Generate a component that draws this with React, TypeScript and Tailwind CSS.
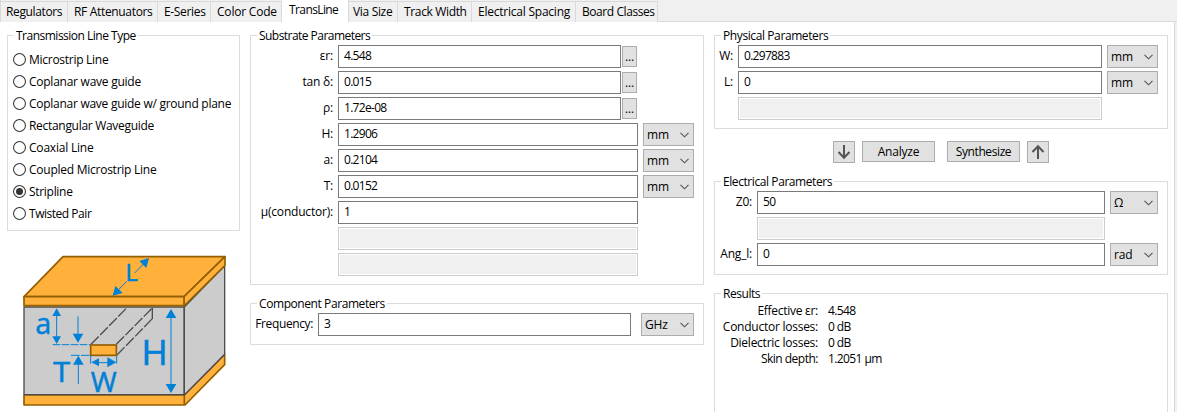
import type { ReactNode } from "react";

function Tab({ label, className }: { label: string; className: string }) {
  return (
    <div className={`h-[21px] shrink-0 whitespace-nowrap border-r border-t border-[#d9d9d9] bg-[#f0f0f0] leading-[20px] ${className}`}>
      {label}
    </div>
  );
}

function Group({
  title,
  titleClass,
  className,
  children,
}: {
  title: string;
  titleClass: string;
  className: string;
  children?: ReactNode;
}) {
  return (
    <fieldset className={`min-w-0 shrink-0 border border-[#dcdcdc] ${className}`}>
      <legend className={`ml-[6px] h-[15px] whitespace-nowrap px-[2px] leading-[16px] ${titleClass}`}>{title}</legend>
      {children}
    </fieldset>
  );
}

function Field({ value, className }: { value?: string; className: string }) {
  if (value === undefined) {
    return <div className={`h-[23px] shrink-0 border border-[#cccccc] bg-[#f0f0f0] shadow-[inset_0_0_0_1px_#fff] ${className}`} />;
  }
  return (
    <div className={`h-[23px] shrink-0 border border-[#7a7a7a] bg-white pl-[5px] leading-[20px] tracking-[-0.7px] ${className}`}>{value}</div>
  );
}

function Combo({ value, className }: { value: string; className: string }) {
  return (
    <div className={`flex h-[23px] shrink-0 items-center justify-between border border-[#adadad] bg-[#e1e1e1] pl-[3px] pr-[4px] ${className}`}>
      <span className="leading-[21px]">{value}</span>
      <svg width="9" height="6" viewBox="0 0 9 6" fill="none" stroke="#555" strokeWidth="1.1">
        <path d="M0.5 0.8 L4.5 4.8 L8.5 0.8" />
      </svg>
    </div>
  );
}

function Row({ label, labelClass, children }: { label?: string; labelClass: string; children: ReactNode }) {
  return (
    <div className="flex h-[23px]">
      <div className={`shrink-0 whitespace-nowrap text-right leading-[21px] ${labelClass}`}>{label}</div>
      {children}
    </div>
  );
}

function MoreButton() {
  return (
    <div className="ml-[1px] mt-[1px] h-[21px] w-[15px] border border-[#adadad] bg-[#e1e1e1] text-center leading-[20px]">...</div>
  );
}

const lineTypes = [
  { label: "Microstrip Line", track: "tracking-[-0.27px]" },
  { label: "Coplanar wave guide", track: "tracking-[-0.25px]" },
  { label: "Coplanar wave guide w/ ground plane", track: "tracking-[-0.27px]" },
  { label: "Rectangular Waveguide", track: "tracking-[-0.3px]" },
  { label: "Coaxial Line", track: "tracking-[-0.2px]" },
  { label: "Coupled Microstrip Line", track: "tracking-[-0.25px]" },
  { label: "Stripline", track: "tracking-[-0.3px]" },
  { label: "Twisted Pair", track: "tracking-[-0.47px]" },
];

function Radio({ checked }: { checked: boolean }) {
  return (
    <svg width="13" height="13" viewBox="0 0 13 13" className="mt-[4px] shrink-0">
      <circle cx="6.5" cy="6.5" r="5.95" fill="#fff" stroke="#333" strokeWidth="1.05" />
      {checked && <circle cx="6.5" cy="6.5" r="3.5" fill="#333" />}
    </svg>
  );
}

function Stripline() {
  return (
    <svg width="210" height="160" viewBox="60 36 630 480" className="ml-[13px] mt-[21px]">
      <g strokeLinejoin="round">
        <path d="M72 465 H553 L674 343 V374 L555 495 H72 Z" fill="#ffb13b" stroke="#945f00" strokeWidth="5" />
        <path d="M553 465 V495" stroke="#945f00" strokeWidth="5" />
        <path d="M553 201 L674 77 V343 L553 465 Z" fill="#cccccc" stroke="#4d4d4d" strokeWidth="4" />
        <rect x="72" y="201" width="480" height="263" fill="#cccccc" stroke="#4d4d4d" strokeWidth="4" />
        <path d="M72 170 L189 50 H675 L552 170 Z" fill="#ffb13b" stroke="#945f00" strokeWidth="5" />
        <path d="M552 170 L675 50 V76 L552 198 Z" fill="#ffb13b" stroke="#945f00" strokeWidth="5" />
        <rect x="72" y="170" width="480" height="27" fill="#ffb13b" stroke="#945f00" strokeWidth="5" />
      </g>
      <g fill="none" stroke="#4d4d4d" strokeWidth="4">
        <path d="M273 313 L380 204" strokeDasharray="33 6" />
        <path d="M349 313 L457 204" strokeDasharray="33 6" />
        <path d="M351 345 L457 236" strokeDasharray="33 6" />
        <path d="M457 204 V238" />
      </g>
      <rect x="272" y="315" width="77" height="31" fill="#ffb13b" stroke="#945f00" strokeWidth="5" />
      <g stroke="#0080d7" strokeWidth="3" fill="none">
        <path d="M170 215 V300 M234 229 V300 M235 360 V432 M513 220 V445 M285 368 H338" />
        <path d="M404 99 L438 64 M380 124 L347 158" />
        <path d="M158 314 H270" strokeDasharray="23 4" />
        <path d="M213 346 H270" strokeDasharray="26 4" />
        <path d="M272 347 V371 M350 347 V371" />
      </g>
      <g fill="#0080d7">
        <path d="M170 205 L183 228 H157 Z M170 312 L157 289 H183 Z" />
        <path d="M234 308 L218 281 H250 Z M235 347 L219 374 H251 Z" />
        <path d="M513 207 L529 234 H497 Z M513 459 L497 432 H529 Z" />
        <path d="M274 367 L297 355 V379 Z M349 367 L322 352 V382 Z" />
        <path d="M447 54 L439 84 L418 63 Z M338 167 L346 138 L368 159 Z" />
      </g>
      <g fill="#0080d7" stroke="#0080d7" strokeWidth="1" fontFamily="'Noto Sans', sans-serif" letterSpacing="0">
        <text x="376" y="122" fontSize="73">L</text>
        <text x="106" y="283" fontSize="86">a</text>
        <text x="159" y="426" fontSize="83" textLength="52" lengthAdjust="spacingAndGlyphs">T</text>
        <text x="272" y="455" fontSize="84" textLength="78" lengthAdjust="spacingAndGlyphs">W</text>
        <text x="424" y="375" fontSize="105" textLength="80" lengthAdjust="spacingAndGlyphs">H</text>
      </g>
    </svg>
  );
}

function ArrowButton({ up, className }: { up?: boolean; className: string }) {
  return (
    <div className={`flex h-[22px] w-[22px] shrink-0 items-center justify-center border border-[#adadad] bg-[#e1e1e1] ${className}`}>
      <svg width="14" height="16" viewBox="0 0 14 16" fill="none" stroke="#545454" strokeWidth="2">
        {up ? <path d="M7 15 V2.5 M1.5 8 L7 2.3 L12.5 8" /> : <path d="M7 1 V13.5 M1.5 8 L7 13.7 L12.5 8" />}
      </svg>
    </div>
  );
}

function PushButton({ label, className }: { label: string; className: string }) {
  return (
    <div className={`h-[21px] w-[73px] shrink-0 border border-[#adadad] bg-[#e1e1e1] text-center leading-[20px] ${className}`}>{label}</div>
  );
}

const results = [
  { label: "Effective εr:", value: "4.548", track: "tracking-[-0.28px]" },
  { label: "Conductor losses:", value: "0 dB", track: "tracking-[-0.25px]" },
  { label: "Dielectric losses:", value: "0 dB", track: "tracking-[-0.25px]" },
  { label: "Skin depth:", value: "1.2051 µm", track: "tracking-[-0.5px]" },
];

export default function App() {
  return (
    <div className="flex h-[412px] w-[1177px] flex-col overflow-hidden bg-[#f0f0f0] font-['Open_Sans','Noto_Sans',sans-serif] text-[12px] tracking-[-0.2px] text-black">
      <div className="flex h-[22px] shrink-0">
        <div className="flex border-b border-l border-[#d9d9d9] pt-[1px]">
          <Tab label="Regulators" className="w-[67px] pl-[5px] tracking-[-0.37px]" />
          <Tab label="RF Attenuators" className="w-[90px] pl-[6px] tracking-[-0.33px]" />
          <Tab label="E-Series" className="w-[53px] pl-[6px] tracking-[-0.33px]" />
          <Tab label="Color Code" className="w-[71px] pl-[6px]" />
        </div>
        <div className="w-[66px] shrink-0 bg-white pl-[7px] leading-[19px] tracking-[-0.6px]">TransLine</div>
        <div className="flex flex-1 border-b border-l border-[#d9d9d9] pt-[1px]">
          <Tab label="Via Size" className="w-[49px] pl-[4px] tracking-[-0.33px]" />
          <Tab label="Track Width" className="w-[74px] pl-[6px] tracking-[-0.35px]" />
          <Tab label="Electrical Spacing" className="w-[104px] pl-[6px] tracking-[-0.23px]" />
          <Tab label="Board Classes" className="w-[82px] pl-[6px] tracking-[-0.43px]" />
        </div>
      </div>
      <div className="flex h-[390px] w-[1175px] border-r border-[#d9d9d9] bg-white pl-[7px] pt-[6px]">
        <div className="flex w-[233px] shrink-0 flex-col">
          <Group title="Transmission Line Type" titleClass="tracking-[-0.5px]" className="h-[203px] w-[233px]">
            <div className="flex flex-col pl-[5px] pt-[6px]">
              {lineTypes.map((t) => (
                <div key={t.label} className="flex h-[22px] items-start gap-[3px]">
                  <Radio checked={t.label === "Stripline"} />
                  <span className={`whitespace-nowrap leading-[22px] ${t.track}`}>{t.label}</span>
                </div>
              ))}
            </div>
          </Group>
          <Stripline />
        </div>
        <div className="ml-[10px] flex w-[454px] shrink-0 flex-col">
          <Group title="Substrate Parameters" titleClass="tracking-[-0.54px]" className="h-[257px] w-[454px]">
            <div className="flex flex-col gap-[3px] pt-[2px]">
              <Row label="εr:" labelClass="w-[82px] mr-[5px]"><Field value="4.548" className="w-[283px]" /><MoreButton /></Row>
              <Row label="tan δ:" labelClass="w-[82px] mr-[5px]"><Field value="0.015" className="w-[283px]" /><MoreButton /></Row>
              <Row label="ρ:" labelClass="w-[82px] mr-[5px]"><Field value="1.72e-08" className="w-[283px]" /><MoreButton /></Row>
              <Row label="H:" labelClass="w-[82px] mr-[5px]"><Field value="1.2906" className="w-[300px]" /><Combo value="mm" className="ml-[5px] w-[51px]" /></Row>
              <Row label="a:" labelClass="w-[82px] mr-[5px]"><Field value="0.2104" className="w-[300px]" /><Combo value="mm" className="ml-[5px] w-[51px]" /></Row>
              <Row label="T:" labelClass="w-[82px] mr-[5px]"><Field value="0.0152" className="w-[300px]" /><Combo value="mm" className="ml-[5px] w-[51px]" /></Row>
              <Row label="µ(conductor):" labelClass="w-[82px] mr-[5px]"><Field value="1" className="w-[300px]" /></Row>
              <Row labelClass="w-[82px] mr-[5px]"><Field className="w-[300px]" /></Row>
              <Row labelClass="w-[82px] mr-[5px]"><Field className="w-[300px]" /></Row>
            </div>
          </Group>
          <Group title="Component Parameters" titleClass="tracking-[-0.42px]" className="mt-[11px] h-[49px] w-[454px]">
            <div className="pt-[2px]">
              <Row label="Frequency:" labelClass="w-[62px] mr-[5px] tracking-[-0.38px]"><Field value="3" className="w-[313px]" /><Combo value="GHz" className="ml-[10px] w-[53px]" /></Row>
            </div>
          </Group>
        </div>
        <div className="ml-[10px] flex w-[454px] shrink-0 flex-col">
          <Group title="Physical Parameters" titleClass="tracking-[-0.4px]" className="h-[101px] w-[454px]">
            <div className="flex flex-col gap-[3px] pt-[2px]">
              <Row label="W:" labelClass="w-[18px] mr-[5px]"><Field value="0.297883" className="w-[364px]" /><Combo value="mm" className="ml-[5px] w-[51px]" /></Row>
              <Row label="L:" labelClass="w-[18px] mr-[5px]"><Field value="0" className="w-[364px]" /><Combo value="mm" className="ml-[5px] w-[51px]" /></Row>
              <Row labelClass="w-[18px] mr-[5px]"><Field className="w-[364px]" /></Row>
            </div>
          </Group>
          <div className="mt-[12px] flex h-[22px] pl-[119px]">
            <ArrowButton className="" />
            <PushButton label="Analyze" className="ml-[7px]" />
            <PushButton label="Synthesize" className="ml-[12px] tracking-[-0.4px]" />
            <ArrowButton up className="ml-[7px]" />
          </div>
          <Group title="Electrical Parameters" titleClass="tracking-[-0.42px]" className="mt-[11px] h-[101px] w-[454px]">
            <div className="flex flex-col gap-[3px] pt-[2px]">
              <Row label="Z0:" labelClass="w-[37px] mr-[5px]"><Field value="50" className="w-[348px]" /><Combo value="Ω" className="ml-[5px] w-[48px]" /></Row>
              <Row labelClass="w-[37px] mr-[5px]"><Field className="w-[348px]" /></Row>
              <Row label="Ang_l:" labelClass="w-[37px] mr-[5px]"><Field value="0" className="w-[348px]" /><Combo value="rad" className="ml-[5px] w-[48px]" /></Row>
            </div>
          </Group>
          <Group title="Results" titleClass="tracking-[-0.45px]" className="mt-[11px] h-[150px] w-[454px]">
            <div className="pt-[2px]">
              {results.map((r) => (
                <div key={r.label} className="flex h-[16px] leading-[16px]">
                  <span className={`w-[103px] whitespace-nowrap text-right ${r.track}`}>{r.label}</span>
                  <span className="ml-[10px] whitespace-nowrap tracking-[-0.6px]">{r.value}</span>
                </div>
              ))}
            </div>
          </Group>
        </div>
      </div>
    </div>
  );
}
